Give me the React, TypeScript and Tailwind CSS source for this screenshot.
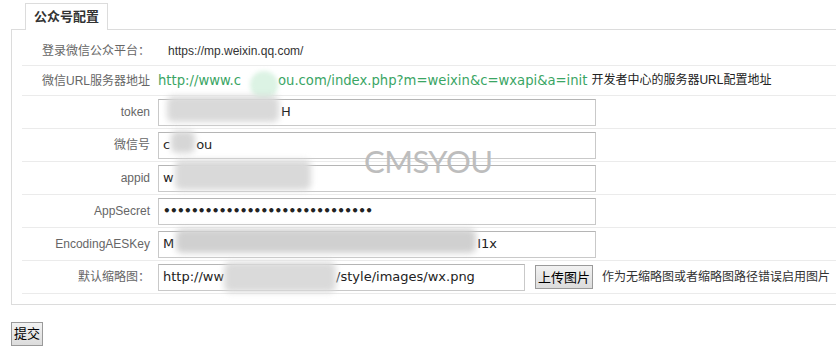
import React from "react";

const cjk = '"Liberation Sans", "Noto Sans CJK SC", sans-serif';
const verdana = '"DejaVu Sans", "Noto Sans CJK SC", sans-serif';

function Row({ label, children, tall = true }: { label: string; children: React.ReactNode; tall?: boolean }) {
  return (
    <div className={`flex items-center border-b border-[#ebebeb] ${tall ? "h-[33px]" : "h-[30px]"}`}>
      <div className="w-[136px] pr-[8px] text-right text-[12px] text-[#666] shrink-0">{label}</div>
      <div className="flex items-center">{children}</div>
    </div>
  );
}

function Field({ width = 438, children }: { width?: number; children: React.ReactNode }) {
  return (
    <div
      className="relative h-[27px] border border-[#c9c9c9] border-t-[#b5b5b5] bg-white pl-[4px] flex items-center overflow-visible text-[13px] text-[#222] whitespace-nowrap"
      style={{ width, fontFamily: verdana }}
    >
      {children}
    </div>
  );
}

function Blur({ w, h = 26, tone = "#d4d4d4" }: { w: number; h?: number; tone?: string }) {
  return (
    <span
      className="inline-block blur-[3px] rounded-[6px]"
      style={{ width: w, height: h, background: tone }}
    />
  );
}

function Btn({ children }: { children: React.ReactNode }) {
  return (
    <button className="h-[24px] px-[2px] border border-[#9a9a9a] bg-gradient-to-b from-[#f2f2f2] to-[#dcdcdc] text-[13px] text-black leading-none">
      {children}
    </button>
  );
}

export default function App() {
  return (
    <div className="relative w-[836px] h-[350px] bg-white overflow-hidden" style={{ fontFamily: cjk }}>
      <div className="pl-[11px] pt-[3px]">
        <div className="flex pl-[14px]">
          <div className="relative z-10 -mb-px h-[27px] w-[83px] border border-b-0 border-[#dcdcdc] bg-white flex items-center pl-[8px] text-[13px] font-bold text-[#333]">
            公众号配置
          </div>
        </div>
        <div className="w-[840px] border border-[#dcdcdc] pt-[6px] pl-[10px] pb-[10px]">
          <Row label="登录微信公众平台：" tall={false}>
            <span className="pl-[10px] text-[12px] text-[#333]">https://mp.weixin.qq.com/</span>
          </Row>
          <Row label="微信URL服务器地址" tall={false}>
            <span className="text-[13.2px] text-[#3aa564] whitespace-nowrap relative" style={{ fontFamily: verdana }}>
              http://www.c
              <span className="inline-block w-[37px] relative">
                <span className="absolute left-[9px] -top-[14px] w-[28px] h-[28px] rounded-full bg-[#dcf3e4] blur-[2px]" />
              </span>
              ou.com/index.php?m=weixin&amp;c=wxapi&amp;a=init
            </span>
            <span className="ml-[4px] text-[12px] text-[#222] whitespace-nowrap">开发者中心的服务器URL配置地址</span>
          </Row>
          <Row label="token">
            <Field>
              <span className="ml-[4px] mr-[2px]"><Blur w={112} tone="#d9d9d9" /></span>
              H
            </Field>
          </Row>
          <Row label="微信号">
            <Field>
              c
              <span className="mx-[1px]"><Blur w={24} h={22} tone="#d6d6d6" /></span>
              ou
            </Field>
          </Row>
          <Row label="appid">
            <Field>
              w
              <span className="ml-[1px]"><Blur w={136} h={30} tone="#d9d9d9" /></span>
            </Field>
          </Row>
          <Row label="AppSecret">
            <Field>
              <span className="text-[12px] font-bold tracking-[-0.7px]">••••••••••••••••••••••••••••••</span>
            </Field>
          </Row>
          <Row label="EncodingAESKey">
            <Field>
              M
              <span className="ml-[2px] mr-[1px]"><Blur w={300} h={24} tone="#d0d0d0" /></span>
              I1x
            </Field>
          </Row>
          <Row label="默认缩略图：">
            <Field width={367}>
              http://ww
              <Blur w={112} h={30} tone="#dadada" />
              /style/images/wx.png
            </Field>
            <span className="ml-[10px]"><Btn>上传图片</Btn></span>
            <span className="ml-[9px] text-[12px] text-[#333] whitespace-nowrap">作为无缩略图或者缩略图路径错误启用图片</span>
          </Row>
        </div>
        <div className="pt-[16px]">
          <Btn>提交</Btn>
        </div>
      </div>
      <div
        className="absolute left-[364px] top-[138px] text-[31px] tracking-[-0.5px] text-[#bdbdbd] pointer-events-none"
        style={{ fontFamily: '"Lato", sans-serif' }}
      >
        CMSYOU
      </div>
    </div>
  );
}
